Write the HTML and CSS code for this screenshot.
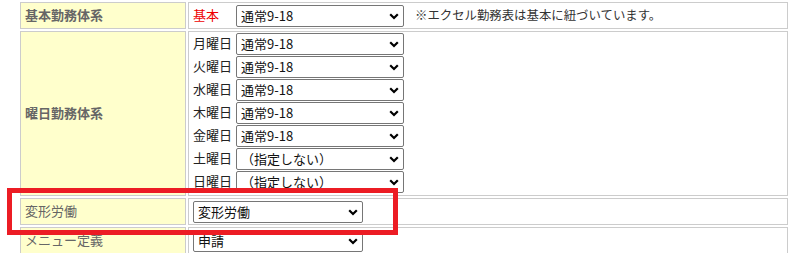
FILE: index.html
```html
<!DOCTYPE html>
<html lang="ja">

<head>
    <meta charset="UTF-8">
    <title>勤務体系設定</title>
    <link rel="stylesheet" href="styles.css">
</head>

<body>
    <table class="settings">
        <!-- 基本勤務体系 -->
        <tr>
            <th class="strong">基本勤務体系</th>
            <td>
                <div class="line">
                    <span class="base-label">基本</span>
                    <select class="sel"><option>通常9-18</option></select>
                    <span class="note">※エクセル勤務表は基本に紐づいています。</span>
                </div>
            </td>
        </tr>

        <!-- 曜日勤務体系 -->
        <tr>
            <th class="strong">曜日勤務体系</th>
            <td class="days-cell">
                <div class="days">
                    <div class="line"><span class="day">月曜日</span><select class="sel"><option>通常9-18</option></select></div>
                    <div class="line"><span class="day">火曜日</span><select class="sel"><option>通常9-18</option></select></div>
                    <div class="line"><span class="day">水曜日</span><select class="sel"><option>通常9-18</option></select></div>
                    <div class="line"><span class="day">木曜日</span><select class="sel"><option>通常9-18</option></select></div>
                    <div class="line"><span class="day">金曜日</span><select class="sel"><option>通常9-18</option></select></div>
                    <div class="line"><span class="day">土曜日</span><select class="sel"><option>（指定しない）</option></select></div>
                    <div class="line"><span class="day">日曜日</span><select class="sel"><option>（指定しない）</option></select></div>
                </div>
            </td>
        </tr>

        <!-- 変形労働 -->
        <tr>
            <th>変形労働</th>
            <td><div class="line"><select class="sel wide"><option>変形労働</option></select></div></td>
        </tr>

        <!-- メニュー定義 -->
        <tr>
            <th>メニュー定義</th>
            <td><div class="line"><select class="sel wide"><option>申請</option></select></div></td>
        </tr>
    </table>

    <!-- highlight box -->
    <div class="highlight"></div>
</body>

</html>
```

FILE: styles.css
```css
body {
    margin: 0;
    font-family: "Noto Sans CJK JP", "Noto Sans", sans-serif;
    font-size: 13px;
    color: #222;
    background-color: #ffffff;
}

/* Settings table */
.settings {
    margin: 0 0 0 18px;
    width: 772px;
    border-collapse: separate;
    border-spacing: 2px;
}

.settings th,
.settings td {
    border: 1px solid #cccccc;
    padding: 2px 4px 1px 4px;
    height: 22px;
    vertical-align: middle;
    line-height: 18px;
}

.settings th {
    width: 156px;
    padding-top: 1px;
    padding-bottom: 2px;
    background-color: #ffffcc;
    color: #666666;
    font-weight: normal;
    text-align: left;
}

.settings th.strong {
    font-weight: bold;
}

.line {
    display: flex;
    align-items: center;
    height: 22px;
}

.base-label,
.day,
.note {
    padding-bottom: 2px;
}

.base-label {
    width: 43px;
    color: #ee0000;
}

.day {
    width: 43px;
    color: #222;
}

.note {
    margin-left: 11px;
    font-size: 12.4px;
    color: #333;
}

/* Days column */
.settings td.days-cell {
    padding-top: 1px;
    padding-bottom: 2px;
}

.days {
    display: flex;
    flex-direction: column;
    gap: 1px;
}

/* Select boxes */
.sel {
    -webkit-appearance: none;
    appearance: none;
    width: 168px;
    height: 22px;
    margin: 0;
    padding: 0 18px 1px 4px;
    border: 1px solid #767676;
    border-radius: 2px;
    background-color: #ffffff;
    background-image: url("data:image/svg+xml;utf8,<svg xmlns='http://www.w3.org/2000/svg' width='10' height='7' viewBox='0 0 10 7'><path d='M1.2 1.2 L5 5 L8.8 1.2' fill='none' stroke='black' stroke-width='2.2'/></svg>");
    background-repeat: no-repeat;
    background-position: right 4px center;
    font-family: "Noto Sans CJK JP", "Noto Sans", sans-serif;
    font-size: 13px;
    color: #111;
}

.sel.wide {
    width: 170px;
}

/* Red highlight frame */
.highlight {
    position: absolute;
    left: 7px;
    top: 188px;
    width: 381px;
    height: 37px;
    border: 5px solid #ec1c24;
}
```
